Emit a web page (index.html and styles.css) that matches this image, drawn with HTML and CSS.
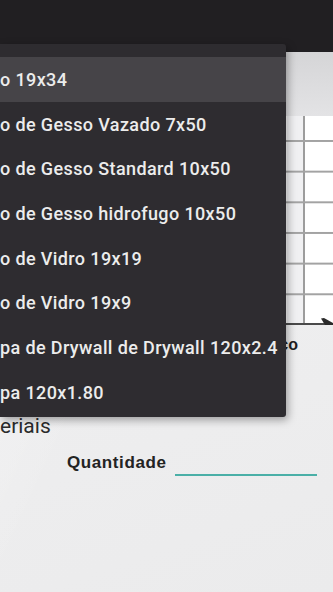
FILE: index.html
```html
<!DOCTYPE html>
<html lang="pt">
<head>
  <meta charset="UTF-8" />
  <meta name="viewport" content="width=device-width, initial-scale=1" />
  <title>Orçamento</title>
  <link rel="stylesheet" href="styles.css">
</head>
<body>
  <header class="appbar"></header>

  <main class="screen">
    <div class="chart">
      <div class="chart-head"></div>
      <div class="chart-grid">
        <svg class="axis-arrow" viewBox="0 0 12 7" xmlns="http://www.w3.org/2000/svg">
          <polygon points="0,0.5 3,0 12,5 12,7 4,7" fill="#2a2a2a"/>
        </svg>
      </div>
    </div>

    <div class="price-row">
      <span class="price-label">ço</span>
    </div>

    <h2 class="section-title">eriais</h2>

    <div class="field-row">
      <label class="field-label" for="qtd">Quantidade</label>
      <input class="field-input" id="qtd" type="text" />
    </div>
  </main>

  <ul class="dropdown">
    <li class="active">o 19x34</li>
    <li>o de Gesso Vazado 7x50</li>
    <li>o de Gesso Standard 10x50</li>
    <li>o de Gesso hidrofugo 10x50</li>
    <li>o de Vidro 19x19</li>
    <li>o de Vidro 19x9</li>
    <li>pa de Drywall de Drywall 120x2.4</li>
    <li>pa 120x1.80</li>
  </ul>
</body>
</html>
```

FILE: styles.css
```css
html, body {
  margin: 0;
  height: 100%;
}
body {
  position: relative;
  width: 333px;
  height: 592px;
  overflow: hidden;
  font-family: Roboto, "Noto Sans", sans-serif;
  background-color: #ededee;
  background-image:
    linear-gradient(115deg, rgba(255,255,255,0.6) 0%, rgba(255,255,255,0) 45%),
    linear-gradient(200deg, rgba(0,0,0,0.04) 0%, rgba(0,0,0,0) 40%),
    linear-gradient(160deg, #e4e4e6 0%, #eeeeef 55%, #ebebec 100%);
}
.appbar {
  height: 52px;
  background-color: #211f22;
}
.chart-head {
  height: 64px;
  background: linear-gradient(#d5d5d7, #e3e3e5);
}
.chart-grid {
  position: relative;
  height: 207px;
  border-bottom: 2px solid #4a4a4a;
  background-color: #fff;
  background-image:
    linear-gradient(#a3a3a3 2px, transparent 2px),
    linear-gradient(90deg, #9c9c9c 2px, transparent 2px),
    linear-gradient(90deg, transparent 287px, #f0f0f2 287px, #f0f0f2 303px, transparent 303px);
  background-size: 100% 30.67px, 62px 100%, 100% 100%;
  background-position: 0 24px, 303px 0, 0 0;
}
.axis-arrow {
  position: absolute;
  right: 0;
  bottom: -2px;
  width: 12px;
  height: 7px;
}
.price-row {
  margin-top: 10px;
  padding-right: 35px;
  text-align: right;
  height: 20px;
}
.price-label {
  font-family: "Liberation Sans", Arial, sans-serif;
  font-weight: bold;
  font-size: 16px;
  line-height: 20px;
  color: #1e1e1e;
}
.section-title {
  margin: 59px 0 0;
  font-size: 21px;
  font-weight: normal;
  line-height: 24px;
  color: #2b2b2b;
}
.field-row {
  display: flex;
  align-items: flex-start;
  margin-top: 14px;
  padding-left: 67px;
}
.field-label {
  font-family: "Liberation Sans", Arial, sans-serif;
  font-weight: bold;
  font-size: 17px;
  line-height: 22px;
  letter-spacing: 0.6px;
  color: #232323;
}
.field-input {
  width: 142px;
  height: 22px;
  margin: 0 0 0 8px;
  padding: 0;
  border: none;
  border-bottom: 2px solid #4aafa7;
  background: transparent;
  outline: none;
}
.dropdown {
  position: absolute;
  top: 44px;
  left: 0;
  width: 286px;
  height: 373px;
  margin: 0;
  padding: 13px 0 0;
  box-sizing: border-box;
  list-style: none;
  background-color: #2e2c30;
  border-radius: 0 3px 3px 0;
  box-shadow: 2px 3px 8px rgba(0, 0, 0, 0.35);
}
.dropdown li {
  box-sizing: border-box;
  height: 44.7px;
  padding-top: 2px;
  line-height: 42.7px;
  font-size: 18px;
  font-weight: 500;
  letter-spacing: 0.38px;
  color: #ececec;
  white-space: nowrap;
}
.dropdown li.active {
  background-color: #464448;
}
```
